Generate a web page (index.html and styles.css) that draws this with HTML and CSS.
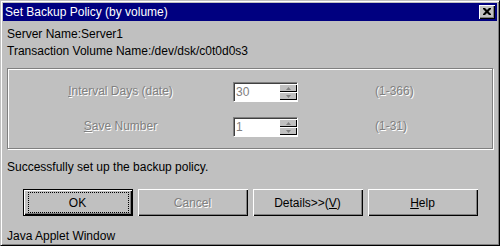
FILE: index.html
```html
<!DOCTYPE html>
<html lang="en">

<head>
    <meta charset="UTF-8">
    <meta name="viewport" content="width=device-width, initial-scale=1.0">
    <title>Set Backup Policy (by volume)</title>
    <link rel="stylesheet" href="styles.css">
</head>

<body>
    <div class="window">
        <div class="titlebar">
            <span class="caption">Set Backup Policy (by volume)</span>
            <span class="close-btn">
                <svg width="8" height="7" viewBox="0 0 8 7">
                    <path d="M0 0h2l2 2 2-2h2v1l-2.5 2.5L8 6v1H6L4 5 2 7H0V6l2.5-2.5L0 1z" fill="#000"/>
                </svg>
            </span>
        </div>
        <div class="content">
            <div class="info">Server Name:Server1</div>
            <div class="info">Transaction Volume Name:/dev/dsk/c0t0d0s3</div>

            <!-- 设置项 -->
            <div class="group">
                <div class="label disabled"><u>I</u>nterval Days (date)</div>
                <div class="spin">
                    <span class="value">30</span>
                    <span class="arrows">
                        <span class="arrow"><svg width="5" height="3" viewBox="0 0 5 3"><path d="M2.5 0L5 3H0z" fill="#808080"/></svg></span>
                        <span class="arrow"><svg width="5" height="3" viewBox="0 0 5 3"><path d="M0 0h5L2.5 3z" fill="#808080"/></svg></span>
                    </span>
                </div>
                <div class="range disabled">(1-366)</div>

                <div class="label disabled"><u>S</u>ave Number</div>
                <div class="spin">
                    <span class="value">1</span>
                    <span class="arrows">
                        <span class="arrow"><svg width="5" height="3" viewBox="0 0 5 3"><path d="M2.5 0L5 3H0z" fill="#808080"/></svg></span>
                        <span class="arrow"><svg width="5" height="3" viewBox="0 0 5 3"><path d="M0 0h5L2.5 3z" fill="#808080"/></svg></span>
                    </span>
                </div>
                <div class="range disabled">(1-31)</div>
            </div>

            <div class="message">Successfully set up the backup policy.</div>

            <div class="buttons">
                <span class="btn default">OK</span>
                <span class="btn disabled">Cancel</span>
                <span class="btn">Details&gt;&gt;(<u>V</u>)</span>
                <span class="btn"><u>H</u>elp</span>
            </div>

            <div class="status">Java Applet Window</div>
        </div>
    </div>
</body>

</html>
```

FILE: styles.css
```css
body {
    margin: 0;
    padding: 0;
    font-family: "Liberation Sans", Arial, sans-serif;
    font-size: 12px;
    color: #000;
}

.window {
    width: 500px;
    height: 246px;
    box-sizing: border-box;
    padding: 2px;
    background: #c0c0c0;
    border: 1px solid;
    border-color: #c0c0c0 #000 #000 #c0c0c0;
    box-shadow: inset 1px 1px 0 #fff, inset -1px -1px 0 #808080;
    overflow: hidden;
}

.titlebar {
    height: 18px;
    background: #000080;
    color: #fff;
    display: flex;
    align-items: center;
    justify-content: space-between;
    padding: 0 2px 0 2px;
}

.caption {
    line-height: 18px;
}

.close-btn {
    width: 16px;
    height: 14px;
    box-sizing: border-box;
    background: #c0c0c0;
    display: flex;
    align-items: center;
    justify-content: center;
    box-shadow: inset 1px 1px 0 #fff, inset -1px -1px 0 #000, inset -2px -2px 0 #808080;
}

.close-btn svg {
    display: block;
    margin: 0 1px 1px 0;
}

.content {
    padding: 5px 4px 0 4px;
}

.info {
    line-height: 17px;
    white-space: nowrap;
}

.group {
    margin-top: 8px;
    height: 81px;
    box-sizing: border-box;
    padding: 13px 0 11px 0;
    border: 1px solid #808080;
    box-shadow: inset 1px 1px 0 #fff, 1px 1px 0 #fff;
    display: grid;
    grid-template-columns: 225px 65px 1fr;
    grid-auto-rows: 20px;
    row-gap: 15px;
}

.disabled {
    color: #808080;
    text-shadow: 1px 1px 0 #fff;
}

.label {
    text-align: center;
    line-height: 19px;
}

.range {
    padding-left: 77px;
    line-height: 19px;
}

.spin {
    display: flex;
    box-sizing: border-box;
    height: 20px;
    background: #fff;
    border: 1px solid;
    border-color: #808080 #fff #fff #808080;
    box-shadow: inset 1px 1px 0 #404040;
}

.value {
    flex: 1;
    color: #808080;
    padding-left: 2px;
    line-height: 18px;
}

.arrows {
    width: 18px;
    display: flex;
    flex-direction: column;
    padding: 1px 0 1px 0;
}

.arrow {
    flex: 1;
    background: #c0c0c0;
    display: flex;
    align-items: center;
    justify-content: center;
    box-shadow: inset 1px 1px 0 #fff, inset -1px -1px 0 #000;
}

.arrow svg {
    display: block;
}

.message {
    margin-top: 10px;
    line-height: 17px;
}

.buttons {
    margin-top: 13px;
    display: flex;
    justify-content: center;
    gap: 5px;
}

.btn {
    width: 110px;
    height: 27px;
    box-sizing: border-box;
    display: flex;
    align-items: center;
    justify-content: center;
    background: #c0c0c0;
    box-shadow: inset 1px 1px 0 #fff, inset -1px -1px 0 #000, inset -2px -2px 0 #808080;
}

.btn.default {
    position: relative;
    border: 1px solid #000;
}

.btn.default::after {
    content: "";
    position: absolute;
    top: 2px;
    left: 4px;
    right: 3px;
    bottom: 2px;
    border: 1px dotted #000;
}

.status {
    margin-top: 13px;
    line-height: 14px;
}
```
